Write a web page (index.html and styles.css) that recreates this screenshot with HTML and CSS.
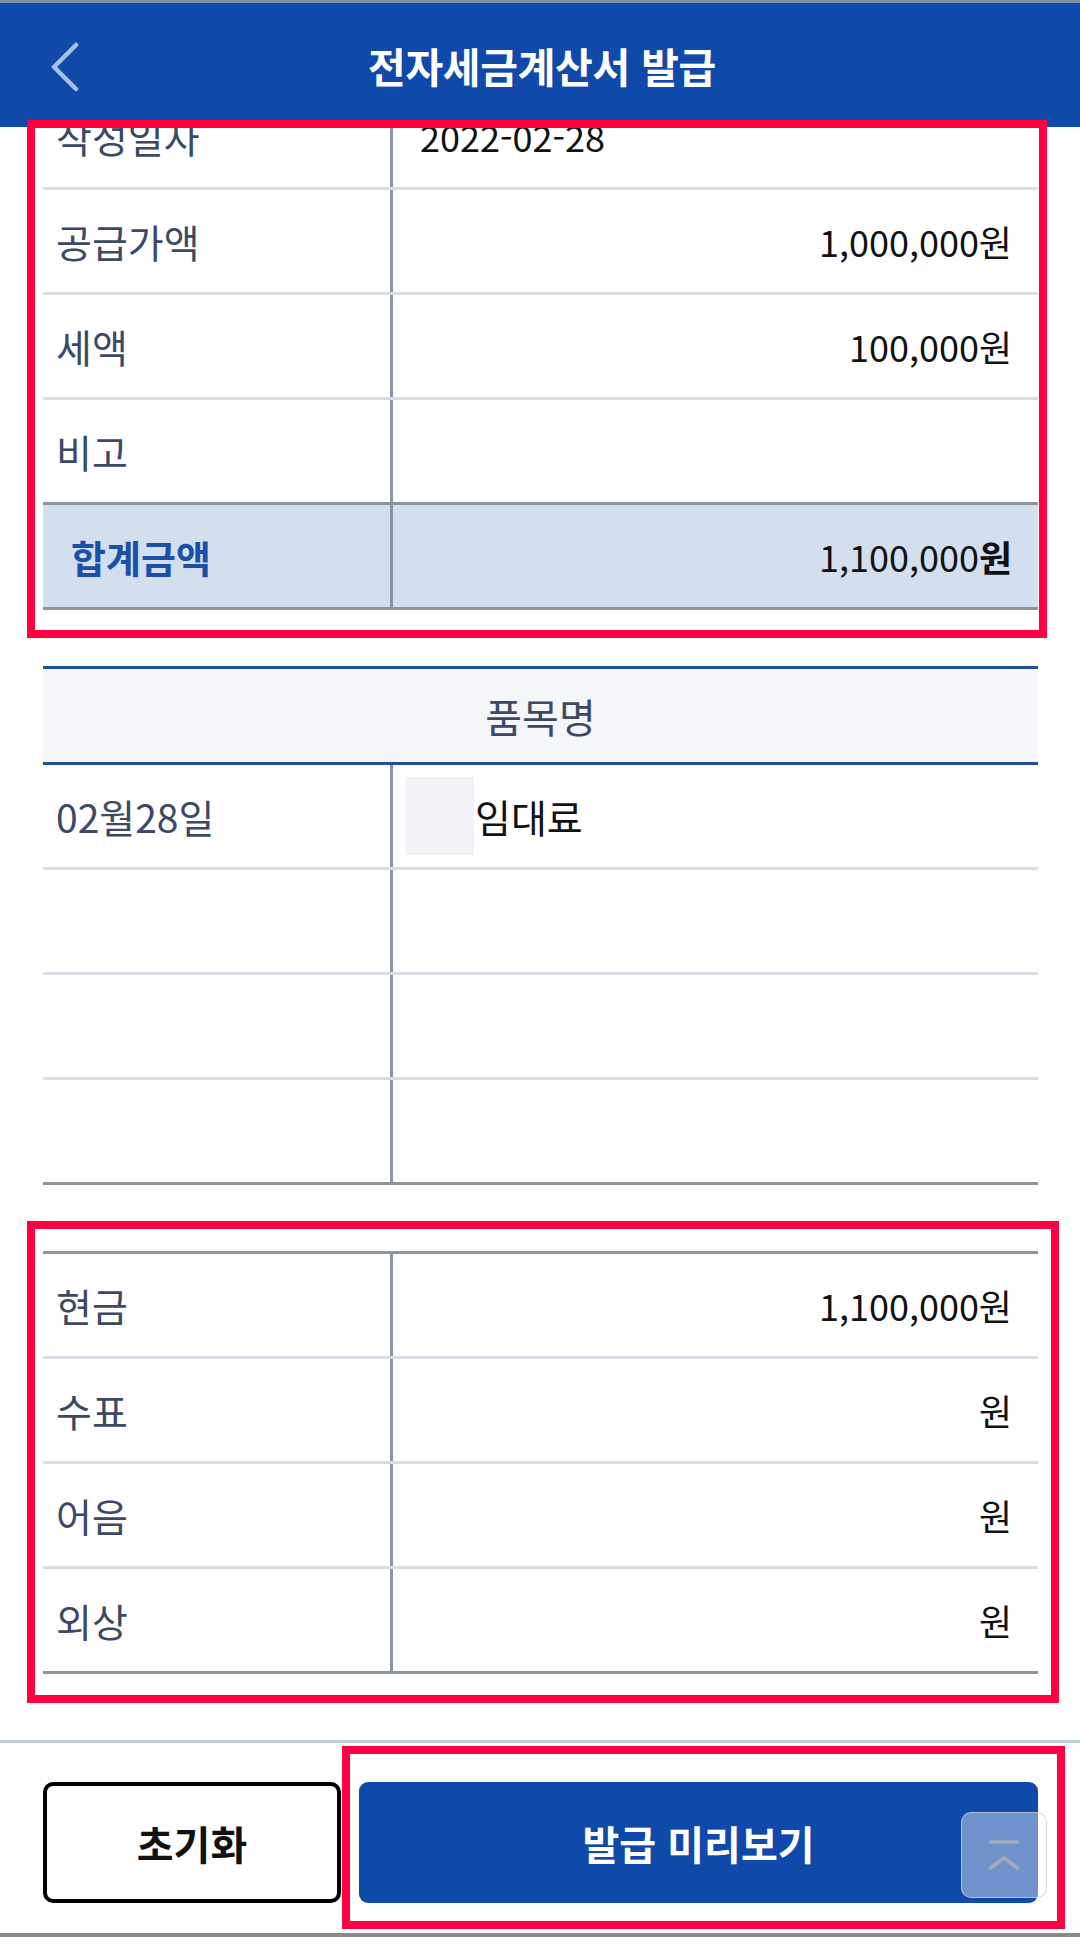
FILE: index.html
```html
<!DOCTYPE html>
<html lang="ko">
<head>
<meta charset="utf-8">
<title>전자세금계산서 발급</title>
<link rel="stylesheet" href="styles.css">
</head>
<body>
<div class="page">
  <header class="appbar">
    <div class="appbar-left">
      <svg class="back" width="32" height="50" viewBox="0 0 32 50" aria-hidden="true">
        <polyline points="27,3 5,25 27,47" fill="none" stroke="#a9bfe6" stroke-width="4.5" stroke-linecap="round" stroke-linejoin="round"/>
      </svg>
    </div>
    <h1 class="title">전자세금계산서 발급</h1>
    <div class="appbar-right"></div>
  </header>

  <main class="content">
    <section class="tbl summary">
      <div class="row"><div class="k">작성일자</div><div class="v left">2022-02-28</div></div>
      <div class="row"><div class="k">공급가액</div><div class="v">1,000,000원</div></div>
      <div class="row"><div class="k">세액</div><div class="v">100,000원</div></div>
      <div class="row row-dark"><div class="k">비고</div><div class="v"></div></div>
      <div class="row row-total row-dark"><div class="k">합계금액</div><div class="v">1,100,000<b>원</b></div></div>
    </section>

    <section class="tbl items">
      <div class="items-head">품목명</div>
      <div class="row"><div class="k">02월28일</div><div class="v item"><span class="ph"></span><span class="item-name">임대료</span></div></div>
      <div class="row"><div class="k"></div><div class="v"></div></div>
      <div class="row"><div class="k"></div><div class="v"></div></div>
      <div class="row row-dark"><div class="k"></div><div class="v"></div></div>
    </section>

    <section class="tbl pay">
      <div class="row"><div class="k">현금</div><div class="v">1,100,000원</div></div>
      <div class="row"><div class="k">수표</div><div class="v">원</div></div>
      <div class="row"><div class="k">어음</div><div class="v">원</div></div>
      <div class="row row-dark"><div class="k">외상</div><div class="v">원</div></div>
    </section>
  </main>

  <footer class="actions">
    <button class="btn btn-reset" type="button">초기화</button>
    <button class="btn btn-preview" type="button">발급 미리보기</button>
  </footer>
  <div class="tabbar"></div>

  <button class="to-top" type="button" aria-label="맨 위로">
    <svg width="86" height="86" viewBox="0 0 86 86" aria-hidden="true">
      <line x1="28" y1="30" x2="58" y2="30" stroke="#a4abb7" stroke-width="3.5"/>
      <polyline points="28,57 43,46 58,57" fill="none" stroke="#a4abb7" stroke-width="3.5"/>
    </svg>
  </button>

  <div class="mark mark-1"></div>
  <div class="mark mark-2"></div>
  <div class="mark mark-3"></div>
</div>
</body>
</html>
```
FILE: styles.css
```css
html, body {
  margin: 0;
  padding: 0;
  background: #fff;
}
body {
  font-family: "Noto Sans CJK KR", "Noto Sans", sans-serif;
}
.page {
  position: relative;
  width: 1080px;
  height: 1953px;
  overflow: hidden;
  background: #fff;
}

/* app bar (fixed over scrolled content) */
.appbar {
  position: absolute;
  top: 0;
  left: 0;
  width: 1080px;
  height: 124px;
  border-top: 3px solid #8190a9;
  background: #0f4aab;
  display: grid;
  grid-template-columns: 1fr auto 1fr;
  align-items: center;
  z-index: 5;
}
.appbar-left {
  padding-left: 49px;
  display: flex;
  align-items: center;
  padding-top: 4px;
}
.back { display: block; }
.title {
  margin: 0;
  color: #fff;
  font-size: 41px;
  font-weight: 700;
  letter-spacing: -0.3px;
  line-height: 1;
  padding-left: 4px;
}

/* content */
.content {
  padding: 85px 42px 0 43px;
}
.tbl {
  width: 995px;
}
.row {
  display: grid;
  grid-template-columns: 350px 1fr;
  height: 105px;
  box-sizing: border-box;
  border-bottom: 3px solid #d9dee5;
}
.row-dark {
  border-bottom-color: #8c949d;
}
.k {
  box-sizing: border-box;
  border-right: 3px solid #8c949d;
  display: flex;
  align-items: center;
  padding-left: 13px;
  color: #3b4966;
  font-size: 39px;
}
.v {
  display: flex;
  align-items: center;
  justify-content: flex-end;
  padding-right: 26px;
  color: #111;
  font-size: 36px;
}
.v.left {
  justify-content: flex-start;
  padding-left: 27px;
}
.v b { font-weight: 700; }

.row-total {
  background: #d3deee;
}
.row-total .k {
  padding-left: 28px;
  color: #1b4fa8;
  font-weight: 700;
  font-size: 38px;
}

.items {
  margin-top: 56px;
}
.items-head {
  height: 99px;
  box-sizing: border-box;
  border-top: 3px solid #214f9d;
  border-bottom: 3px solid #214f9d;
  background: #f4f6fa;
  display: flex;
  align-items: center;
  justify-content: center;
  color: #3b4966;
  font-size: 40px;
}
.v.item {
  justify-content: flex-start;
  padding-left: 12px;
}
.item-name {
  font-size: 39px;
}
.ph {
  width: 69px;
  height: 78px;
  background: #f1f3f7;
  margin-right: 1px;
}

.pay {
  margin-top: 66px;
  border-top: 3px solid #8c949d;
}

/* bottom actions */
.actions {
  margin-top: 66px;
  border-top: 3px solid #c5cdd9;
  border-bottom: 4px solid #8a8a8a;
  padding: 39px 42px 30px 43px;
  display: flex;
  gap: 18px;
}
.btn {
  height: 121px;
  box-sizing: border-box;
  font-family: "Noto Sans CJK KR", "Noto Sans", sans-serif;
  font-size: 40px;
  font-weight: 700;
  cursor: pointer;
}
.btn-reset {
  width: 298px;
  border: 4px solid #000;
  border-radius: 10px;
  background: #fff;
  color: #111;
}
.btn-preview {
  flex: 1;
  border: 0;
  border-radius: 9px;
  background: #0f4aab;
  color: #fff;
}
.tabbar {
  height: 20px;
  background: #fff;
}

/* overlays */
.to-top {
  position: absolute;
  left: 961px;
  top: 1812px;
  width: 86px;
  height: 86px;
  padding: 0;
  box-sizing: border-box;
  border: 1.5px solid rgba(200, 205, 214, 0.75);
  border-radius: 10px;
  background: rgba(255, 255, 255, 0.4);
  z-index: 4;
}
.to-top svg {
  display: block;
  margin: -1.5px;
}
.mark {
  position: absolute;
  box-sizing: border-box;
  border: 8px solid #ff0040;
  z-index: 6;
  pointer-events: none;
}
.mark-1 { left: 27px; top: 120px; width: 1020px; height: 518px; }
.mark-2 { left: 27px; top: 1221px; width: 1032px; height: 482px; }
.mark-3 { left: 342px; top: 1746px; width: 723px; height: 183px; }
```
